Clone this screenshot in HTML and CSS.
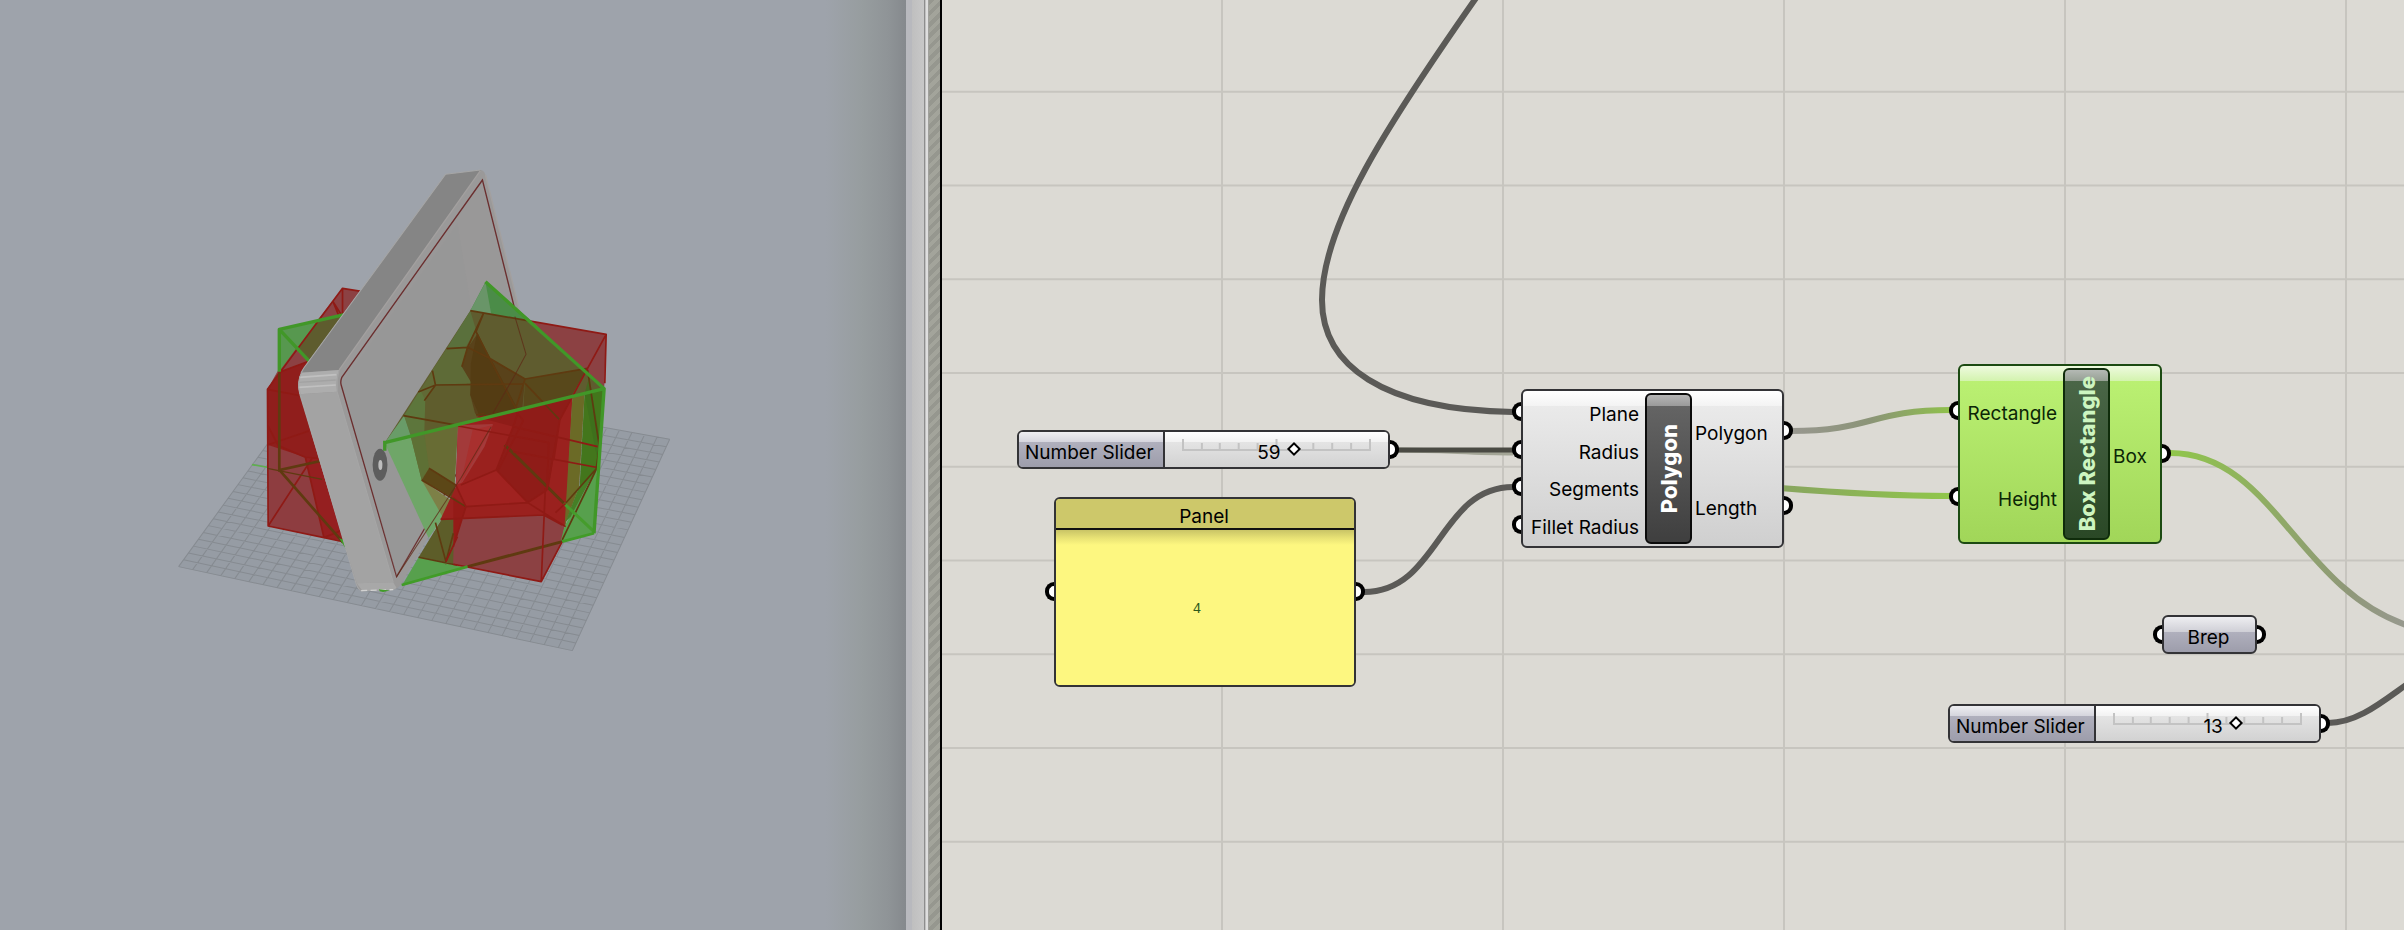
FILE: index.html
```html
<!DOCTYPE html>
<html lang="en">
<head>
<meta charset="utf-8">
<title>Parametric model</title>
<link rel="stylesheet" href="styles.css">
</head>
<body>
<main class="app">
<section class="viewport" aria-label="Model view">
<svg class="model" viewBox="0 0 906 930" role="img" aria-label="Tilted slab with red and green boxes">
<g transform="translate(160 150) scale(.338 .3333)">
<path d="M55 1250L1220 1502 1508 868 465 676Z" fill="#969ca4"/>
<g id="floor" class="floor"></g>
<path d="M272 944L318 952" stroke="#5fb04f" stroke-width="5"/>

<path d="M354 538L550 492 640 720 354 960Z" fill="#56924e"/>
<path d="M356 538L470 512 402 597Z" fill="#5aa052"/>
<path d="M540 415L600 425 570 560 440 640 318 718 350 660Z" fill="#8c4143"/>
<path d="M354 538L550 492 560 500 440 650 350 670Z" fill="#5e5c2e"/>
<path d="M354 538L470 511 354 668Z" fill="#57984f"/>
<path d="M402 597L440 634 350 668Z" fill="#8c4143"/>
<path d="M318 718L440 634 520 760 560 1178 320 1128Z" fill="#8e3d40"/>
<path d="M350 668L440 634 520 930 430 922 320 885 318 718Z" fill="#901e1c"/>
<path d="M430 925L470 925 540 1170 485 1163Z" fill="#951f20"/>
<path class="e-red" d="M600 425L540 415 318 718 320 1128 542 1175M540 415V500L512 455 530 500M350 668L440 634M318 718L420 738M318 885L440 843M318 825L350 887 430 922 470 925M430 922L485 1163 540 1140M320 1128L450 925"/>
<path class="e-hid" d="M353 668V960L475 933M353 960L542 1178" stroke-width="8"/>
<path class="e-hid" d="M318 955L480 988" stroke-width="4"/>
<path class="e-grn" d="M353 665V538L545 494M353 538L442 634"/>
<path d="M530 1165L552 1200 545 1170Z" fill="#419c28"/>

<path d="M1100 514L1320 553 1314 720Z" fill="#8c4143"/>
<path d="M1128 1295L868 1243 840 1100 1190 1000Z" fill="#8c4143"/>
<path d="M765 1222L900 1252 715 1308Z" fill="#57a04d"/>

<path d="M845 73L948 60Q958 60 963 75L1093 600Q1097 625 1085 650L715 1300Q705 1316 690 1320L600 1324Q587 1322 580 1300L412 720Q405 690 425 655Z" fill="#9a9999"/>
<path d="M845 73L950 60 530 660 415 668Q420 660 427 652Z" fill="#858585"/>
<path d="M418 668L530 660Q518 690 524 725L412 733Q404 700 418 668Z" fill="#adadad"/>
<path d="M412 682L522 674M410 712L520 705" stroke="#c0c0c0" stroke-width="5"/>
<path d="M410 697L520 690" stroke="#a2a2a2" stroke-width="4"/>
<path d="M412 733L524 725 690 1297 582 1300Z" fill="#a3a3a3"/>
<path d="M582 1300L690 1297 700 1314 690 1320 600 1324Z" fill="#a8a8a8"/>
<path d="M845 73L948 60M530 660L524 690 524 725 690 1297M845 73L425 655Q405 690 412 720L580 1300Q587 1322 600 1324" fill="none" stroke="#a6a6a6" stroke-width="3"/>
<path d="M948 62L530 660M963 75L1093 600" fill="none" stroke="#a3a09f" stroke-width="4"/>
<path d="M595 1322L690 1319" stroke="#d2d2d2" stroke-width="4" stroke-dasharray="18 10"/>
<path d="M954 90L538 682Q533 695 536 705L700 1280 1083 613Z" fill="#999898" stroke="#6b2f2f" stroke-width="4"/>
<path d="M880 220L922 480 720 797 790 1120 700 1280 538 700Z" fill="#959494" opacity=".3"/>
<ellipse cx="651" cy="944" rx="22" ry="48" fill="#5d5d5d"/>
<ellipse cx="652" cy="945" rx="6" ry="15" fill="#bdbdbd"/>
<path d="M648 1318L680 1322 660 1326 650 1324Z" fill="#419c28"/>

<path d="M963 395L1100 514 918 482Z" fill="#4b8c48"/>
<path d="M963 397L980 492 918 482Z" fill="#699568"/>
<path d="M918 482L1100 514 1314 716 665 878Z" fill="#5f5c2f"/>
<path d="M918 482L935 540 905 590 893 640 848 596Z" fill="#5a703c"/>
<path d="M848 596L893 650 918 740 880 825 782 847 722 797Z" fill="#616a36"/>
<path d="M848 596L910 590 893 650 930 700 815 705 806 660Z" fill="#5e6b37"/>
<path d="M770 720L785 750 790 845 742 858 722 797Z" fill="#5d763c"/>
<path d="M782 847L785 750 815 705 922 703 918 735 932 790 950 808 880 825Z" fill="#5f5d2d"/>
<path d="M722 797L742 858 665 878Z" fill="#699c68"/>
<path d="M940 550L975 625 1080 687 1072 775 950 808 932 790 918 735 922 700 893 650 910 595Z" fill="#59421a"/>
<path d="M938 550L1060 780 950 808 918 735 920 640Z" fill="#543c13"/>
<path d="M1080 687L1265 655 1215 742 1075 776Z" fill="#58481b"/>

<path d="M665 880L742 860 838 1100 795 1165Z" fill="#6fa668"/>
<path d="M742 860L882 826 870 1040 800 955 774 990Z" fill="#686c34"/>
<path d="M742 860L782 850 796 955 774 990Z" fill="#5e7035"/>
<path d="M774 990L860 1050 838 1104Z" fill="#7d8047"/>
<path d="M796 955L875 1005 868 1045 774 990Z" fill="#5c4717"/>
<path d="M870 1040L868 1243 765 1222 838 1100Z" fill="#5d5d29"/>
<path d="M882 826L1220 740 1200 1105 1190 1175 1128 1295 868 1243Z" fill="#8c4143"/>
<path d="M882 826L1220 740 1200 1130 1135 1095 830 1108 875 1010Z" fill="#9a211e"/>
<path d="M882 826L985 822 960 890 890 1005 875 1010Z" fill="#a33a3a"/>
<path d="M925 840L985 825 890 1000Z" fill="#a8302e"/>
<path d="M1060 782L1220 740 1183 810 1150 1015 1088 1058 997 960 1045 830 935 800Z" fill="#8f1c18"/>
<path d="M875 1005L995 960 1085 1058 905 1070Z" fill="#a02220"/>
<path d="M868 1040L905 1070 868 1190Z" fill="#941b17"/>
<path d="M1220 740L1256 731 1240 1010 1197 1128Z" fill="#6b6a26"/>
<path d="M1256 731L1314 716 1292 960 1240 1040Z" fill="#43761c"/>
<path d="M1256 731L1270 680 1300 860 1296 940Z" fill="#3c6d1c" opacity=".7"/>
<path d="M1197 1128L1292 960 1284 1150 1185 1177Z" fill="#57a04d"/>
<path d="M1240 1010L1292 955 1215 1100 1200 1115Z" fill="#457f26"/>

<path class="e-hid" d="M918 482L1100 514M957 490L910 592 893 650M957 490L935 545 975 625 1080 687 1265 655M848 596L910 592 975 625M806 662L815 705 782 752M764 726L815 705 1075 702M1080 687L1050 782M975 625L1055 780M720 797L880 826M1080 700L1183 810M935 795L960 790M774 990L905 1070M796 955L875 1005M765 1222L880 1246M815 1118L846 1235 868 1150M1265 660L1300 890 1290 960 1190 1170M1292 955L1200 1060" stroke-width="5"/>
<path class="e-hid" d="M1020 885L1195 1060M910 1250L1190 1175" stroke-width="9"/>
<path d="M1195 1060L1284 1145" stroke="#459c2c" stroke-width="9"/>
<path class="e-red" d="M1100 514L1320 553 1316 700M1320 553L1265 655 1183 810 1145 1020M882 828L1150 878 1145 1015M1183 810L1165 930M1060 785L1045 830 995 960 1088 1058 1200 1130M1075 812L1000 962M995 960L890 1005M875 1005L905 1070 868 1190M905 1070L1088 1058 1145 1020M830 1108L1135 1095 1190 1125M1140 1015L1128 1295 1190 1175M868 1243L1128 1295M1045 830L1295 890M1045 905L1290 952M1050 780L1075 812M1170 1088L1200 1060M880 1160L846 1235"/>
<path d="M1050 500L1083 613 1050 675 985 790M980 830L890 985 700 1280" fill="none" stroke="#5d2a15" stroke-width="3" opacity=".75"/>
<path class="e-grn" d="M963 395L1314 716 1284 1150M665 878L1314 716M665 872V902"/>
<path d="M1284 1150L1190 1175M910 1250L715 1305" stroke="#419c28" stroke-width="8"/>
</g>
</svg>
</section>

<div class="splitter"><i class="rim"></i><i class="track"></i><i class="groove"></i><i class="hatch"></i></div>

<section class="canvas" aria-label="Definition canvas">
<svg class="wires" aria-hidden="true">
<defs>
<linearGradient id="w1" gradientUnits="userSpaceOnUse" x1="850" y1="0" x2="1007" y2="0"><stop stop-color="#98978f"/><stop offset=".5" stop-color="#8b9477"/><stop offset="1" stop-color="#8fc04c"/></linearGradient>
<linearGradient id="w2" gradientUnits="userSpaceOnUse" x1="841" y1="0" x2="1007" y2="0"><stop stop-color="#88a55f"/><stop offset="1" stop-color="#90c64b"/></linearGradient>
<linearGradient id="w3" gradientUnits="userSpaceOnUse" x1="1228" y1="0" x2="1462" y2="0"><stop stop-color="#90c64b"/><stop offset=".75" stop-color="#8f9878"/><stop offset="1" stop-color="#97998e"/></linearGradient>
<pattern id="cells" x="279" y="-3" width="281" height="93.75" patternUnits="userSpaceOnUse"><path d="M1 0V94M0 1H281" stroke="#c7c5bf" stroke-width="2"/></pattern>
</defs>
<rect width="100%" height="100%" fill="url(#cells)"/>
<path class="wire" d="M571 412C440 410 380 365 380 300C380 225 445 125 534 -2"/>
<path class="wire faint" d="M456 450C500 450 530 453 571 453"/>
<path class="wire dark" d="M456 450H571"/>
<path class="wire" d="M422 592C497 592 497 487 571 487"/>
<path class="wire" stroke="url(#w1)" d="M849 431C929 431 929 410 1009 410"/>
<path class="wire" stroke="url(#w2)" d="M838 488C900 493 950 496 1009 496"/>
<path class="wire" stroke="url(#w3)" d="M1228 453C1330 453 1355 587 1464 625"/>
<path class="wire" d="M1386 723C1415 723 1440 702 1464 685"/>
</svg>

<div class="node slider slider-a">
<label class="tag" for="s1">Number Slider</label>
<div class="rail"><div class="scale">
<svg class="ticks" viewBox="0 0 190 12" aria-hidden="true"><path d="M1 0V11H189V0M20 4V11M38 4V11M57 4V11M76 4V11M95 0V11M114 4V11M132 4V11M151 4V11M170 4V11"/></svg>
<output class="value" for="s1" style="right:41%">59</output>
<input id="s1" type="range" min="0" max="100" value="59">
</div></div>
<i class="port out"></i>
</div>

<div class="node panel">
<h2 class="panel-title">Panel</h2>
<pre class="panel-text">4</pre>
<i class="port in"></i><i class="port out"></i>
</div>

<div class="node component polygon">
<ul class="pins inputs"><li><i class="port in"></i><span>Plane</span></li><li><i class="port in"></i><span>Radius</span></li><li><i class="port in"></i><span>Segments</span></li><li><i class="port in"></i><span>Fillet Radius</span></li></ul>
<h2 class="core"><span>Polygon</span></h2>
<ul class="pins outputs"><li><span>Polygon</span><i class="port out"></i></li><li><span>Length</span><i class="port out"></i></li></ul>
</div>

<div class="node component selected">
<ul class="pins inputs"><li><i class="port in"></i><span>Rectangle</span></li><li><i class="port in"></i><span>Height</span></li></ul>
<h2 class="core"><span>Box Rectangle</span></h2>
<ul class="pins outputs"><li><span>Box</span><i class="port out"></i></li></ul>
</div>

<div class="node param"><span>Brep</span><i class="port in"></i><i class="port out"></i></div>

<div class="node slider slider-b">
<label class="tag" for="s2">Number Slider</label>
<div class="rail"><div class="scale">
<svg class="ticks" viewBox="0 0 190 12" aria-hidden="true"><path d="M1 0V11H189V0M20 4V11M38 4V11M57 4V11M76 4V11M95 0V11M114 4V11M132 4V11M151 4V11M170 4V11"/></svg>
<output class="value" for="s2" style="right:35%">13</output>
<input id="s2" type="range" min="0" max="20" value="13">
</div></div>
<i class="port out"></i>
</div>
</section>
</main>
<script src="floor.js"></script>
</body>
</html>
```
FILE: styles.css
```css
* { box-sizing: border-box; }
body {
  margin: 0;
  font: 19px/24px Inter, "Liberation Sans", sans-serif;
  color: #000;
}
h2, ul, pre { margin: 0; padding: 0; font: inherit; list-style: none; }

.app { display: flex; min-height: 100vh; overflow: hidden; }

.viewport {
  flex: 906 1 0;
  min-width: 0;
  background: linear-gradient(to right, #9ea3ab calc(100% - 80px), #979d9f calc(100% - 44px), #8f9497 calc(100% - 18px), #85898d);
}
.model { display: block; width: 100%; }
.floor { fill: none; stroke: #868b91; stroke-width: 3; }
.e-red { fill: none; stroke: #8f1a15; stroke-width: 5; stroke-linejoin: round; }
.e-hid { fill: none; stroke: #5f3a10; }
.e-grn { fill: none; stroke: #419728; stroke-width: 10; stroke-linejoin: round; }

.splitter { flex: none; display: flex; width: 36px; background: #dcdcdc; border-right: 2px solid #000; }
.rim { width: 6px; background: #b8b9be; }
.track { width: 13px; background: linear-gradient(to right, #bfbfbf, #c8c8c8); border-right: 1px solid #8d8d8d; }
.groove { width: 4px; background: linear-gradient(to right, #c0c0c0 1px, #dedede 1px 3px, #a0a09c 3px); }
.hatch { flex: 1; background: repeating-linear-gradient(135deg, #96978f 0 4px, #a3a49b 4px 8px); }

.canvas { position: relative; flex: 1462 1 0; min-width: 0; overflow: hidden; background: #dcdad4; }
.wires { position: absolute; inset: 0; width: 100%; height: 100%; }
.wire { fill: none; stroke-width: 6; }
.wire:not([stroke]) { stroke: #5b5a57; }
.wire.dark { stroke: #4a4a43; stroke-width: 5; }
.wire.faint { stroke: #a3a596; stroke-width: 5; }

.node { position: absolute; border: 2px solid #333336; border-radius: 6px; }

.port { position: absolute; top: 50%; width: 9px; height: 19px; margin-top: -10px; border: 4px solid #000; background: #fff; }
.port.in { right: 100%; margin-right: 2px; border-right: 0; border-radius: 10px 0 0 10px; }
.port.out { left: 100%; margin-left: 2px; border-left: 0; border-radius: 0 10px 10px 0; }

.slider { display: flex; width: 373px; height: 39px; }
.slider-a { left: 75px; top: 430px; }
.slider-b { left: 1006px; top: 704px; }
.tag {
  width: 146px;
  padding: 9px 0 0 6px;
  white-space: nowrap;
  border-right: 2px solid #333336;
  border-radius: 4px 0 0 4px;
  background: linear-gradient(#eeeef1, #d5d5dd 10px, #b0b0bd 10px, #9d9dab);
}
.rail { flex: 1; padding: 7px 17px; border-radius: 0 4px 4px 0; background: linear-gradient(#fff, #f2f2f2 10px, #e4e4e4 10px, #d2d2d2); }
.scale { position: relative; height: 22px; }
.ticks { position: absolute; left: 0; top: 0; width: 100%; height: 12px; fill: none; stroke: #c3c3c3; stroke-width: 2; }
.value { position: absolute; top: 2px; margin-right: 13px; }
.scale input {
  position: absolute;
  left: -5px;
  top: 1px;
  width: calc(100% + 10px);
  height: 18px;
  margin: 0;
  appearance: none;
  background: none;
}
.scale input::-webkit-slider-thumb {
  appearance: none;
  width: 10px;
  height: 10px;
  border: 2px solid #000;
  background: #fff;
  transform: rotate(45deg);
}

.panel { left: 112px; top: 497px; width: 302px; height: 190px; background: #fdf780; }
.panel-title { height: 31px; padding: 6px 2px 0 0; text-align: center; background: #cdc86a; border-bottom: 2px solid #111; border-radius: 4px 4px 0 0; }
.panel-text {
  height: 155px;
  padding: 67px 16px 0 0;
  text-align: center;
  font: 14px/24px "Liberation Mono", monospace;
  color: #2c5a1c;
  background: linear-gradient(#c9c466, #e8e275 8px, #fdf780 15px);
  border-radius: 0 0 4px 4px;
}

.component { display: flex; background: linear-gradient(#fff, #f3f3f3 15px, #eaeaea 15px, #cfcfcf); }
.polygon { left: 579px; top: 389px; width: 263px; height: 159px; padding: 2px 0; }
.pins { display: flex; flex-direction: column; }
.pins li { position: relative; flex: 1; display: flex; align-items: center; white-space: nowrap; }
.pins span { padding-top: 6px; }
.inputs { width: 122px; }
.inputs li { justify-content: flex-end; padding-right: 6px; }
.outputs { flex: 1; }
.outputs li { padding-left: 3px; }
.core {
  display: flex;
  align-items: center;
  justify-content: center;
  width: 47px;
  border: 2px solid #0b0b0b;
  border-radius: 6px;
  background: linear-gradient(#b5b5b5, #9a9a9a 11px, #646464 11px, #3f3f3f);
  color: #fff;
  font-weight: 800;
  font-size: 22px;
}
.core span { writing-mode: vertical-rl; transform: rotate(180deg); white-space: nowrap; }

.selected { left: 1016px; top: 364px; width: 204px; height: 180px; padding: 2px 0; border-color: #1c4a12; color: #0b2606; background: linear-gradient(#eefadf, #d3f3ae 15px, #baf072 15px, #a1d659); }
.selected .inputs { width: 103px; }
.selected .core { border-color: #0f2c0b; color: #cdf5c0; background: linear-gradient(#b4b9b4, #96a094 11px, #4a6647 11px, #2a4826); }

.param { left: 1220px; top: 615px; width: 95px; height: 39px; padding: 9px 2px 0 0; text-align: center; background: linear-gradient(#eeeef1, #cfcfd6 15px, #b0b0bd 15px, #9d9dab); }
```
FILE: floor.js
```js
const floor = document.getElementById('floor');
const [west, south, east, north] = [[55, 1250], [1220, 1502], [1508, 868], [465, 676]];
const cells = 28;
const mix = (a, b, t) => [a[0] + (b[0] - a[0]) * t, a[1] + (b[1] - a[1]) * t];
let d = '';
for (let i = 0; i <= cells; i++) {
  const t = i / cells;
  d += `M${mix(west, south, t)}L${mix(north, east, t)}`;
  d += `M${mix(west, north, t)}L${mix(south, east, t)}`;
}
const path = document.createElementNS('http://www.w3.org/2000/svg', 'path');
path.setAttribute('d', d);
floor.append(path);
```
